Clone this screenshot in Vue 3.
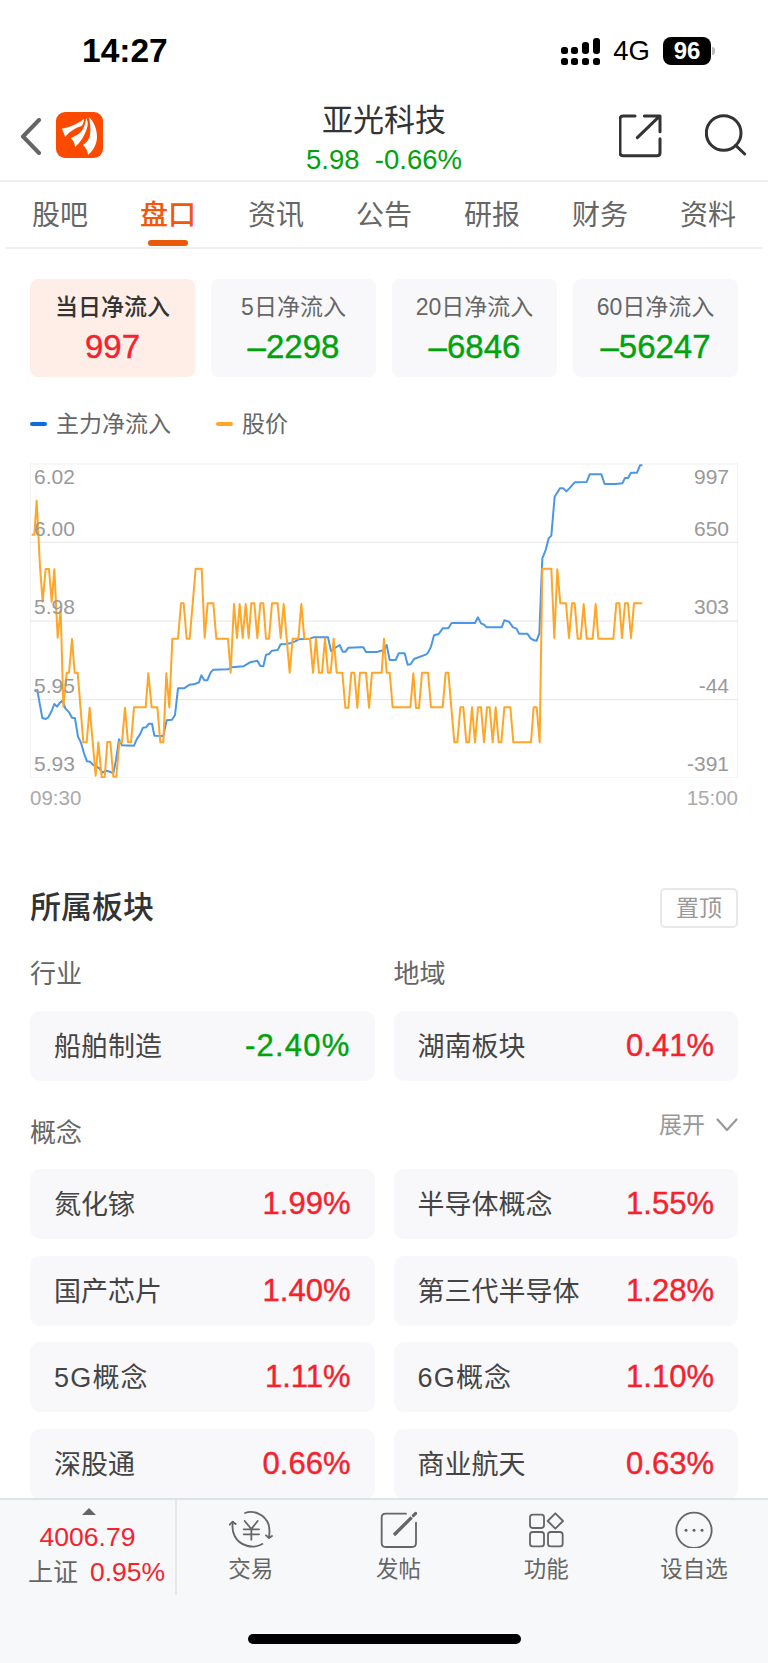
<script setup>
const tabs = ['股吧', '盘口', '资讯', '公告', '研报', '财务', '资料']
const flows = [
  { label: '当日净流入', value: '997', up: true, active: true },
  { label: '5日净流入', value: '–2298' },
  { label: '20日净流入', value: '–6846' },
  { label: '60日净流入', value: '–56247' }
]
const concepts = [
  ['氮化镓', '1.99%'], ['半导体概念', '1.55%'],
  ['国产芯片', '1.40%'], ['第三代半导体', '1.28%'],
  ['5G概念', '1.11%'], ['6G概念', '1.10%'],
  ['深股通', '0.66%'], ['商业航天', '0.63%']
]
const yLabels = [
  { l: '6.02', r: '997', y: 2 },
  { l: '6.00', r: '650', y: 54 },
  { l: '5.98', r: '303', y: 132 },
  { l: '5.95', r: '-44', y: 211 },
  { l: '5.93', r: '-391', y: 289 }
]
const shift = (s) => s.trim().split(/\s+/).map((p) => {
  const [x, y] = p.split(',').map(Number)
  return `${x + 1152},${y}`
}).join(' ')

const orange = `95,254 103,254 110,152 120,350 128,455 137,357 147,357 155,455 163,358 173,563 182,480 190,770 200,668 207,668 216,567 224,668 233,668 250,877 260,877 269,773 287,977 295,877 305,982 314,982 322,876 331,876 340,980 349,980 358,877 366,877 375,773 384,877 393,877 402,772 437,772 445,670 455,772 472,772 481,877 490,877 499,670 508,772 517,566 534,566 543,460 551,460 560,566 569,566 587,356 605,356 614,563 623,460 640,460 649,566 684,566 692,668 702,462 711,564 719,462 728,564 737,462 746,564 754,460 763,460 772,564 781,460 790,460 798,566 807,566 816,460 833,460 842,564 851,462 869,668 878,566 895,566 904,462 913,566 930,566 939,668 948,566 957,668 966,668 975,566 984,668 992,668 1001,566 1010,668 1027,668 1036,773 1045,773 1054,668 1063,668 1072,773 1080,668 1098,668 1107,773 1116,668 1145,668 ` +
  shift(`0,566 8,668 17,668 26,772 79,772 88,670 96,774 105,774 114,668 132,668 141,772 176,772 185,668 193,668 211,877 220,877 229,772 238,772 247,877 255,877 264,772 273,877 282,772 291,772 300,877 309,772 317,772 326,877 335,772 344,877 352,877 361,772 379,772 388,877 441,877 449,772 458,772 467,877 475,356 502,356 511,564 520,358 529,460 546,460 555,564 564,460 572,460 581,566 590,566 599,462 608,566 626,566 635,462 643,566 688,566 697,460 706,460 714,564 723,460 732,460 741,564 750,460 775,460`)

const blue = `103,722 112,720 118,755 127,804 137,807 145,802 155,783 163,762 171,770 180,758 188,752 196,775 208,788 216,803 225,805 234,860 243,878 252,910 261,934 270,935 280,945 290,950 298,955 307,968 318,962 330,965 340,970 348,930 357,868 366,886 402,887 410,868 420,853 429,833 438,832 447,821 456,821 463,857 490,858 500,811 516,809 525,795 534,715 552,715 569,704 585,702 597,697 604,676 613,691 622,691 632,667 640,659 684,658 695,652 713,650 730,649 750,637 772,632 781,648 790,649 798,614 807,612 816,602 833,600 842,583 860,582 869,580 886,574 895,568 930,566 940,562 984,562 993,603 1000,597 1019,585 1028,605 1037,605 1045,593 1080,592 1090,592 1098,606 1130,606 1152,600 ` +
  shift(`8,585 17,630 35,630 44,610 62,610 71,644 80,643 90,627 125,614 132,608 141,590 150,556 164,552 176,535 193,535 203,519 273,519 282,502 291,520 300,524 308,532 353,532 361,511 375,515 387,532 397,535 405,551 430,551 440,565 450,571 458,572 466,550 475,325 485,300 494,265 502,257 512,140 528,115 538,115 547,124 556,115 572,97 608,96 617,73 652,73 662,102 695,102 715,100 723,84 732,84 741,68 759,68 768,46 775,46`)
</script>

<template>
  <div class="page">
    <header class="status">
      <span class="time">14:27</span>
      <div class="status-right">
        <svg class="signal" width="39" height="27" viewBox="0 0 39 27">
          <rect x="0" y="9" width="7" height="7" rx="2.5" />
          <rect x="10" y="9" width="7" height="7" rx="2.5" />
          <rect x="21" y="4" width="7" height="12" rx="3" />
          <rect x="32" y="0" width="7" height="16" rx="3" />
          <rect x="0" y="20" width="7" height="7" rx="2.5" />
          <rect x="10" y="20" width="7" height="7" rx="2.5" />
          <rect x="21" y="20" width="7" height="7" rx="2.5" />
          <rect x="32" y="20" width="7" height="7" rx="2.5" />
        </svg>
        <span class="net">4G</span>
        <span class="battery">96</span>
        <span class="nub"></span>
      </div>
    </header>

    <nav class="nav">
      <div class="nav-left">
        <svg class="chevron" width="22" height="37" viewBox="0 0 22 37">
          <path d="M19 2 L3 18.5 L19 35" fill="none" stroke="#666" stroke-width="4" stroke-linecap="round" stroke-linejoin="round" />
        </svg>
        <svg class="logo" width="47" height="46" viewBox="0 0 47 46">
          <rect width="47" height="46" rx="9" fill="#fc4a00" />
          <path d="M5.7 16.7 C14 15 22 12 28 6.7 C28 10 27 12.500 25.700 14 C19 16 13 20 9 25 C8.500 22 7 19 5.700 16.700Z" fill="#fff" />
          <path d="M30 6 C32 9 32 12 31.300 15 C29 23 25 30 19 35 C19 31 17 28 14.700 26 C20 24 25 21 27 16.700 C29 13 30 9 30 6Z" fill="#fff" />
          <path d="M33 5 C38 10 41 17 41 25 C41 32 37 39 32 43 C32 39 30 36 27 33 C30 31 33 28 34 23 C35 17 34 10 33 5Z" fill="#fff" />
        </svg>
      </div>
      <div class="nav-mid">
        <div class="stock">亚光科技</div>
        <div class="quote">5.98&nbsp;&nbsp;-0.66%</div>
      </div>
      <div class="nav-right">
        <svg width="43" height="44" viewBox="30 27 129 132" fill="none" stroke="#333" stroke-width="9" stroke-linecap="round" stroke-linejoin="round">
          <path d="M78 33 H42 Q33 33 33 42 V143 Q33 152 42 152 H144 Q153 152 153 143 V101" />
          <path d="M85 98 L151 34 M106 33 H153 V80" />
        </svg>
        <svg width="42" height="43" viewBox="284 30 126 129" fill="none" stroke="#333" stroke-width="9" stroke-linecap="round">
          <circle cx="340" cy="87" r="52" />
          <path d="M376 124 L403 150" />
        </svg>
      </div>
    </nav>

    <div class="tabs">
      <div v-for="(t, i) in tabs" :key="t" class="tab" :class="{ on: i === 1 }">{{ t }}</div>
    </div>

    <main class="content">
      <div class="flow-cards">
        <div v-for="f in flows" :key="f.label" class="flow-card" :class="{ active: f.active }">
          <div class="flow-label">{{ f.label }}</div>
          <div class="flow-value" :class="f.up ? 'red' : 'green'">{{ f.value }}</div>
        </div>
      </div>

      <div class="legend">
        <span class="dash blue-dash"></span><span class="legend-text first">主力净流入</span>
        <span class="dash orange-dash"></span><span class="legend-text">股价</span>
      </div>

      <div class="chart">
        <svg width="708" height="315" viewBox="90 39 2124 945">
          <rect x="91" y="42" width="2122" height="942" fill="none" stroke="#f0f0f0" stroke-width="3" />
          <path d="M90 277 H2214 M90 513 H2214 M90 749 H2214" stroke="#e6e6e6" stroke-width="3" />
          <polyline :points="blue" fill="none" stroke="#4a96e8" stroke-width="6" stroke-linejoin="round" />
          <polyline :points="orange" fill="none" stroke="#ffa628" stroke-width="6" stroke-linejoin="round" />
        </svg>
        <template v-for="y in yLabels" :key="y.l">
          <span class="y-label left" :style="{ top: y.y + 'px' }">{{ y.l }}</span>
          <span class="y-label right" :style="{ top: y.y + 'px' }">{{ y.r }}</span>
        </template>
      </div>
      <div class="times"><span>09:30</span><span>15:00</span></div>

      <div class="section-head">
        <h2>所属板块</h2>
        <button class="pin">置顶</button>
      </div>

      <div class="two sub-row">
        <div class="sub">行业</div>
        <div class="sub">地域</div>
      </div>
      <div class="two first-cards">
        <div class="sector"><span>船舶制造</span><b class="green">-2.40%</b></div>
        <div class="sector"><span>湖南板块</span><b class="red">0.41%</b></div>
      </div>

      <div class="concept-head">
        <div class="sub">概念</div>
        <div class="expand">
          展开
          <svg width="22" height="14" viewBox="0 0 22 14">
            <path d="M1.500 1.500 L11 12 L20.500 1.500" fill="none" stroke="#999" stroke-width="2.200" stroke-linecap="round" stroke-linejoin="round" />
          </svg>
        </div>
      </div>
      <div class="two concept-grid">
        <div v-for="c in concepts" :key="c[0]" class="sector">
          <span :class="{ latin: /^\d/.test(c[0]) }">{{ c[0] }}</span><b class="red">{{ c[1] }}</b>
        </div>
      </div>
    </main>

    <footer class="bar">
      <div class="bar-row">
        <div class="index">
          <span class="tri"></span>
          <div class="index-num">4006.79</div>
          <div class="index-line"><span class="index-name">上证</span><span class="index-pct">0.95%</span></div>
        </div>
        <div class="action">
          <svg width="44" height="38" viewBox="28 14 132 114" fill="none" stroke="#666" stroke-width="5.500" stroke-linecap="round" stroke-linejoin="round">
            <path d="M76 23 C100 14 135 25 147 58 C150 70 150 83 148 97" />
            <path d="M139 90 L148 98 L157 92" />
            <path d="M128 116 C100 132 60 122 45 92 C38 78 37 64 40 50" />
            <path d="M30 58 L39 49 L48 56" />
            <path d="M75 47 L95 71 L114 47 M72 72 H118 M72 87 H118 M95 71 V103" />
          </svg>
          <span>交易</span>
        </div>
        <div class="action">
          <svg width="37" height="38" viewBox="480 14 111 114" fill="none" stroke="#666" stroke-width="5.500" stroke-linecap="round" stroke-linejoin="round">
            <path d="M558 25 H497 Q485 25 485 37 V113 Q485 125 497 125 H576 Q588 125 588 113 V52" />
            <path d="M522 89 L575 36" stroke-width="10" stroke-linecap="butt" />
            <path d="M580 31 L587 24" stroke-width="9" />
          </svg>
          <span>发帖</span>
        </div>
        <div class="action">
          <svg width="37" height="38" viewBox="54 14 111 114" fill="none" stroke="#666" stroke-width="5.500" stroke-linejoin="round">
            <rect x="60" y="28" width="42" height="40" rx="8" />
            <rect x="60" y="80" width="42" height="43" rx="8" />
            <rect x="114" y="80" width="44" height="43" rx="8" />
            <path d="M136 24 L159 47 L136 70 L113 47 Z" />
          </svg>
          <span>功能</span>
        </div>
        <div class="action">
          <svg width="40" height="38" viewBox="492 14 120 114" fill="none" stroke="#666" stroke-width="5.500">
            <circle cx="552" cy="75" r="53" />
            <circle cx="528" cy="75" r="4.500" fill="#666" stroke="none" />
            <circle cx="552" cy="75" r="4.500" fill="#666" stroke="none" />
            <circle cx="576" cy="75" r="4.500" fill="#666" stroke="none" />
          </svg>
          <span>设自选</span>
        </div>
      </div>
      <div class="home"></div>
    </footer>
  </div>
</template>

<style scoped>
.page {
  width: 768px;
  height: 1663px;
  overflow: hidden;
  background: #fff;
  display: flex;
  flex-direction: column;
  font-family: "Liberation Sans", "Noto Sans CJK SC", sans-serif;
  color: #333;
}
.red { color: #f5222d; }
.green { color: #00a30e; }

.status {
  height: 100px;
  flex: none;
  display: flex;
  justify-content: space-between;
  padding: 37px 53px 0 82px;
  box-sizing: border-box;
}
.time {
  font-size: 33.500px;
  font-weight: 700;
  line-height: 28px;
  color: #000;
}
.status-right {
  display: flex;
  align-items: flex-start;
  color: #000;
}
.signal { fill: #000; margin: 1px 13px 0 0; }
.net { font-size: 27.500px; line-height: 28px; margin-right: 13px; }
.battery {
  width: 48px;
  height: 28px;
  border-radius: 8px;
  background: #000;
  color: #fff;
  font-size: 24px;
  font-weight: 700;
  line-height: 28px;
  text-align: center;
}
.nub {
  width: 3px;
  height: 8px;
  margin: 10px 0 0 1px;
  background: #bbb;
  border-radius: 0 3px 3px 0;
}

.nav {
  height: 82px;
  flex: none;
  box-sizing: border-box;
  border-bottom: 2px solid #eee;
  display: grid;
  grid-template-columns: 1fr auto 1fr;
}
.nav-left {
  display: flex;
  align-items: flex-start;
  padding: 12px 0 0 20px;
}
.chevron { margin: 6px 14px 0 0; }
.nav-mid { text-align: center; padding-top: 3px; }
.stock { font-size: 31px; line-height: 36px; color: #333; }
.quote { font-size: 27.500px; line-height: 30px; margin-top: 6px; color: #00a30e; }
.nav-right {
  display: flex;
  justify-content: flex-end;
  align-items: flex-start;
  gap: 43px;
  padding: 14px 21px 0 0;
}

.tabs {
  flex: none;
  height: 67px;
  margin: 0 6px;
  box-sizing: border-box;
  border-bottom: 2px solid #eee;
  display: flex;
}
.tab {
  flex: 1;
  position: relative;
  text-align: center;
  font-size: 28px;
  line-height: 40px;
  padding-top: 14px;
  color: #666;
}
.tab.on { color: #f4560a; font-weight: 500; }
.tab.on::after {
  content: "";
  position: absolute;
  left: 34px;
  right: 34px;
  bottom: 1px;
  height: 6px;
  border-radius: 3px;
  background: #e8590c;
}

.content {
  flex: 1;
  min-height: 0;
  overflow: hidden;
  padding: 30px 30px 0;
}
.flow-cards { display: flex; gap: 16px; }
.flow-card {
  flex: 1;
  height: 98px;
  border-radius: 8px;
  background: #f8f8fa;
  text-align: center;
  box-sizing: border-box;
  padding-top: 13px;
}
.flow-card.active { background: #ffeee7; }
.flow-label { font-size: 23px; line-height: 30px; color: #666; }
.active .flow-label { color: #333; font-weight: 500; }
.flow-value {
  font-size: 33px;
  line-height: 38px;
  margin-top: 6px;
  -webkit-text-stroke: 0.4px currentColor;
}

.legend {
  display: flex;
  align-items: center;
  height: 24px;
  margin-top: 35px;
}
.dash { width: 17px; height: 4px; border-radius: 2px; }
.blue-dash { background: #0d6edb; }
.orange-dash { background: #ffa628; }
.legend-text { font-size: 23px; line-height: 24px; color: #666; margin-left: 9px; }
.legend-text.first { margin-right: 45px; }

.chart {
  position: relative;
  margin-top: 27px;
  height: 315px;
}
.chart svg { display: block; }
.y-label {
  position: absolute;
  font-size: 21px;
  line-height: 24px;
  height: 24px;
  color: #999;
}
.y-label.left { left: 4px; }
.y-label.right { right: 9px; }

.times {
  display: flex;
  justify-content: space-between;
  margin-top: 9px;
  font-size: 20.500px;
  line-height: 22px;
  color: #aaa;
}

.section-head {
  display: flex;
  justify-content: space-between;
  align-items: center;
  margin-top: 79px;
  height: 40px;
}
.section-head h2 {
  margin: 0;
  font-size: 31px;
  font-weight: 500;
  line-height: 40px;
  color: #333;
}
.pin {
  width: 78px;
  height: 40px;
  padding: 0;
  box-sizing: border-box;
  border: 2px solid #e8e8e8;
  border-radius: 5px;
  background: #fff;
  font-family: inherit;
  font-size: 23px;
  line-height: 36px;
  color: #999;
}

.two {
  display: grid;
  grid-template-columns: 1fr 1fr;
  column-gap: 19px;
}
.sub-row { margin-top: 31px; }
.sub { font-size: 26px; line-height: 30px; color: #666; }
.first-cards { margin-top: 22px; }
.sector {
  height: 70px;
  border-radius: 10px;
  background: #f8f8fa;
  display: flex;
  justify-content: space-between;
  align-items: center;
  padding: 0 24px 0 24px;
  font-size: 27px;
  color: #444;
}
.sector span { margin-bottom: 3px; }
.sector span.latin { letter-spacing: 1.200px; }
.sector b {
  font-size: 31px;
  font-weight: 400;
  -webkit-text-stroke: 0.4px currentColor;
}
.sector b.red { color: #f5222d; }
.sector b.green { color: #00a30e; letter-spacing: 1.200px; }

.concept-head {
  display: flex;
  justify-content: space-between;
  align-items: flex-start;
  margin-top: 37px;
  height: 30px;
}
.expand {
  display: flex;
  align-items: center;
  gap: 11px;
  margin-top: -8px;
  font-size: 23px;
  line-height: 30px;
  color: #999;
}
.concept-grid { margin-top: 21px; row-gap: 16.500px; }

.bar {
  flex: none;
  height: 165px;
  box-sizing: border-box;
  border-top: 2px solid #e0e2e6;
  background: #f7f8fa;
  display: flex;
  flex-direction: column;
}
.bar-row { display: flex; height: 95px; }
.index {
  width: 177px;
  flex: none;
  position: relative;
  border-right: 2px solid #e8e8ea;
  box-sizing: border-box;
  text-align: center;
}
.tri {
  position: absolute;
  left: 82px;
  top: 8px;
  border-left: 7px solid transparent;
  border-right: 7px solid transparent;
  border-bottom: 7px solid #666;
}
.index-num {
  margin-top: 22px;
  padding-right: 0;
  font-size: 26.500px;
  line-height: 30px;
  color: #f5222d;
}
.index-line {
  display: flex;
  align-items: center;
  justify-content: flex-start;
  padding-left: 28px;
  margin-top: 3px;
  line-height: 34px;
}
.index-name { font-size: 25px; color: #666; margin-right: 12px; }
.index-pct { font-size: 26.500px; color: #f5222d; }
.action {
  flex: 1;
  display: flex;
  flex-direction: column;
  align-items: center;
  padding-top: 10px;
  font-size: 22.500px;
  line-height: 30px;
  color: #666;
}
.action svg { display: block; margin-bottom: 7px; }
.home {
  width: 273px;
  height: 10px;
  border-radius: 5px;
  background: #000;
  margin: 39px 0 0 248px;
}
</style>
